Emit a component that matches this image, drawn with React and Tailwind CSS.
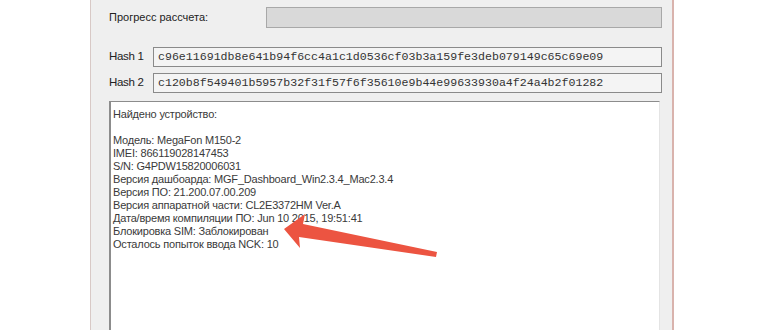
import React from "react";

const lines = [
  "Найдено устройство:",
  "",
  "Модель: MegaFon M150-2",
  "IMEI: 866119028147453",
  "S/N: G4PDW15820006031",
  "Версия дашбоарда: MGF_Dashboard_Win2.3.4_Mac2.3.4",
  "Версия ПО: 21.200.07.00.209",
  "Версия аппаратной части: CL2E3372HM Ver.A",
  "Дата/время компиляции ПО: Jun 10 2015, 19:51:41",
  "Блокировка SIM: Заблокирован",
  "Осталось попыток ввода NCK: 10",
];

const HashRow = ({ label, value }) => (
  <div className="flex items-center h-[20px]">
    <span className="w-[44px] text-[11.5px] tracking-[-0.3px] text-[#222]">{label}</span>
    <div className="flex-1 h-full border border-[#8a8a8a] bg-[#f4f4f4] flex items-center pl-[4px] font-['Liberation_Mono',monospace] text-[11.6px] text-[#333]">
      {value}
    </div>
  </div>
);

const App = () => {
  return (
    <div className="relative w-[770px] h-[330px] bg-white pl-[90px] font-['Liberation_Sans',Arial,sans-serif] overflow-hidden">
      <div className="w-[584px] h-full bg-[#efefef] border-l border-[#d8c9c6] border-r-2 border-r-[#d9b3ad] pl-[18px] pr-[10px] pt-[7px] flex flex-col">
        {/* progress */}
        <div className="flex items-center h-[21px]">
          <span className="w-[157px] text-[11px] text-[#222]">Прогресс рассчета:</span>
          <div className="flex-1 h-full border border-[#a8a8a8] bg-[#d9d9d9]" />
        </div>

        <div className="mt-[19px] flex flex-col gap-[6px]">
          <HashRow label="Hash 1" value="c96e11691db8e641b94f6cc4a1c1d0536cf03b3a159fe3deb079149c65c69e09" />
          <HashRow label="Hash 2" value="c120b8f549401b5957b32f31f57f6f35610e9b44e99633930a4f24a4b2f01282" />
        </div>

        {/* log */}
        <div className="mt-[8px] flex-1 mr-[2px] border-t border-l-2 border-[#8c8c8c] border-r border-r-[#e4e4e4] bg-white pl-[2px] pt-[6px] text-[11px] tracking-[-0.2px] leading-[13px] text-[#3a3a3a]">
          {lines.map((l, i) => (
            <div key={i} className="h-[13px] whitespace-pre">{l}</div>
          ))}
        </div>
      </div>

      <svg className="absolute left-0 top-0 pointer-events-none" width="770" height="330">
        <polygon
          points="284,229 305,214 303,224 437,252 436,257 299,237 300,248"
          fill="#ec5441"
        />
      </svg>
    </div>
  );
};

export default App;
